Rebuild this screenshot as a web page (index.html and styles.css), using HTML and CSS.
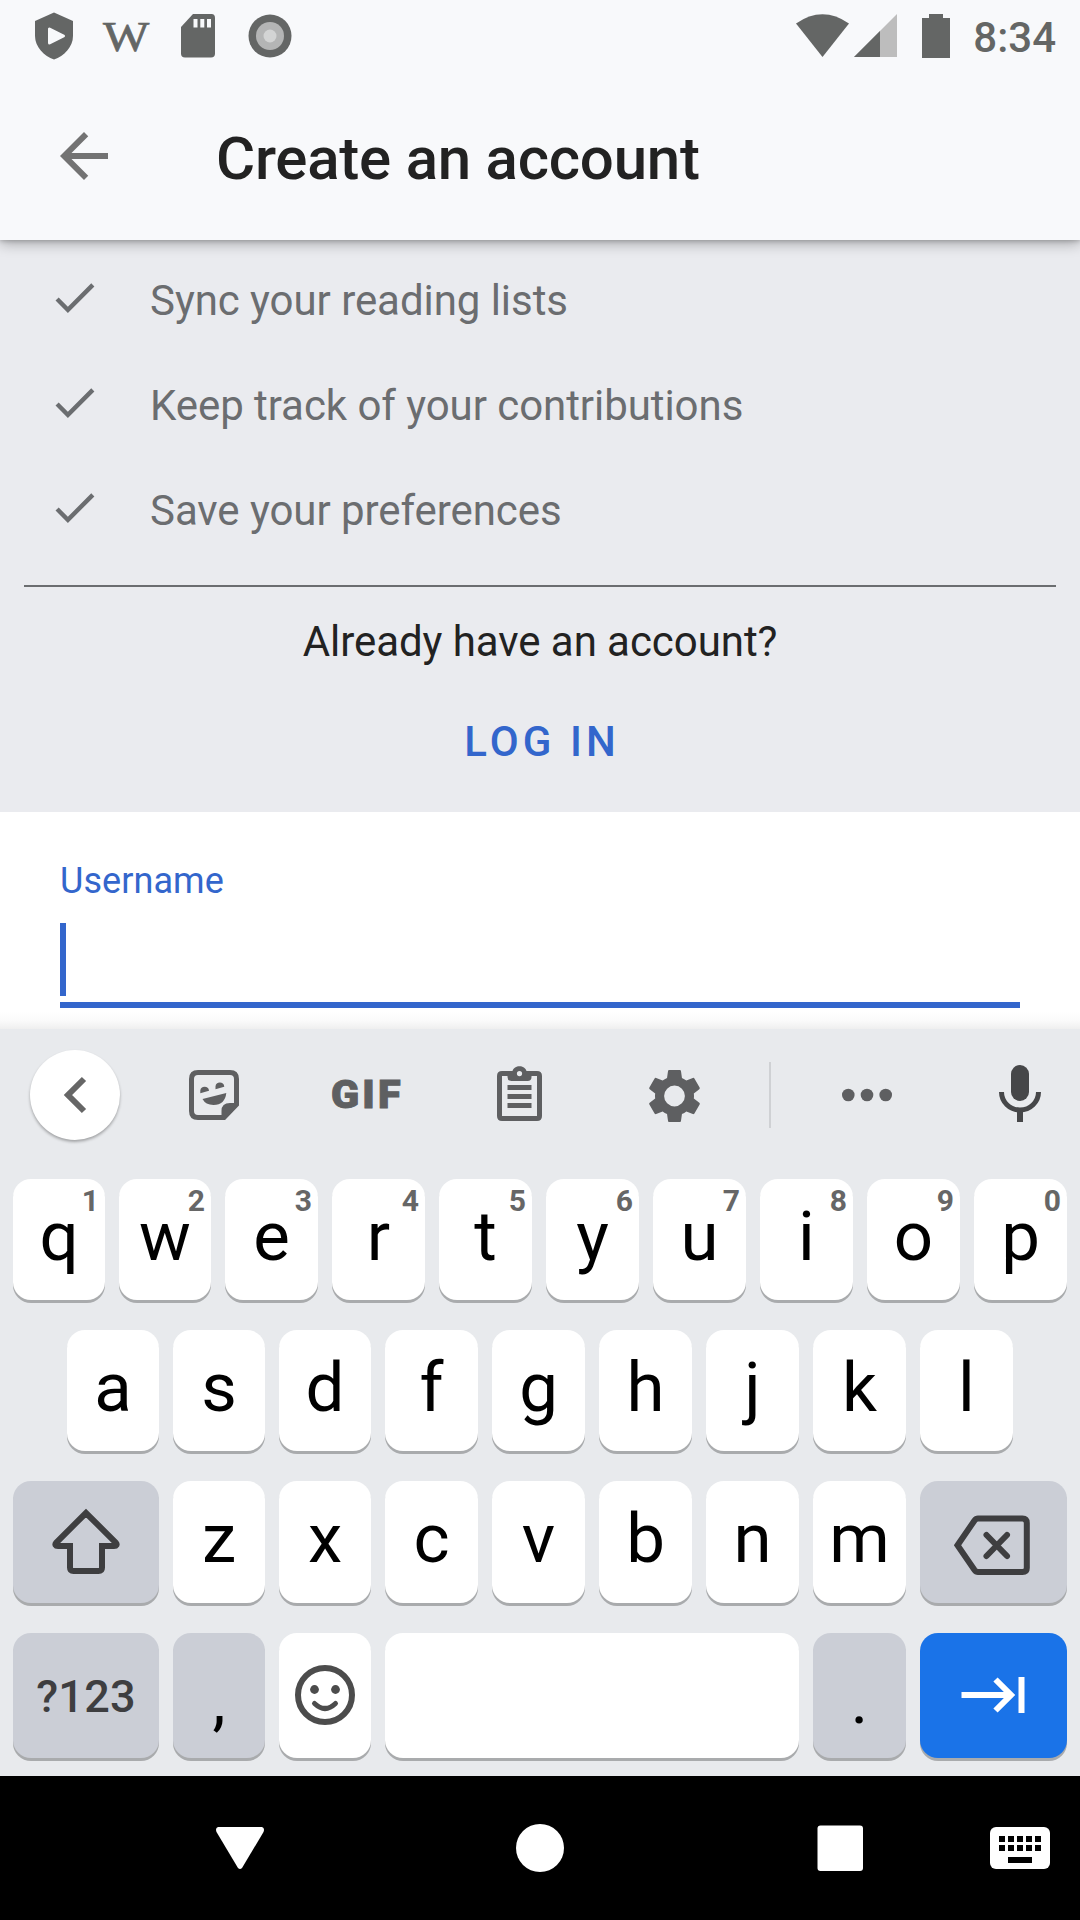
FILE: index.html
```html
<!DOCTYPE html>
<html lang="en">
<head>
<meta charset="utf-8">
<title>Create an account</title>
<link rel="stylesheet" href="styles.css">
</head>
<body>
<div class="screen">
  <header class="header">
    <div class="status-bar">
      <div class="status-left">
        <svg class="status-icon" viewBox="0 0 72 72"><path fill="#646665" d="M36 12.500L55 21V36C55 47 46 56 36 59.500C26 56 17 47 17 36V21Z"/><path fill="#f8f9fb" stroke="#f8f9fb" stroke-width="3" stroke-linejoin="round" d="M31.500 29V43L45.500 36Z"/></svg>
        <div class="status-icon wiki"><span class="wiki-letter">W</span></div>
        <svg class="status-icon" viewBox="0 0 72 72"><path fill="#646665" d="M31 14H49.500Q53 14 53 18V53.500Q53 57.500 49 57.500H23Q19 57.500 19 53.500V27Z"/><path fill="#f8f9fb" d="M31.500 19h4v8.500h-4zM38.300 19h4v8.500h-4zM45 19h4v8.500h-4z"/></svg>
        <svg class="status-icon" viewBox="0 0 72 72"><circle cx="36" cy="36" r="21.500" fill="#646665"/><circle cx="36" cy="36" r="14" fill="#b4b5b5"/><circle cx="36" cy="36" r="6.500" fill="#d3d4d4"/></svg>
      </div>
      <div class="status-right">
        <svg class="signals" viewBox="797 0 154 72"><path fill="#646665" d="M797 23.500Q823.500 5 850 23.500L823.500 57Z"/><path fill="#bdbdbd" d="M898 14V57H855Z"/><path fill="#646665" d="M881 31V57H855ZM930 14h14v4h7v40h-28V18h7z"/></svg>
        <span class="clock">8:34</span>
      </div>
    </div>
    <div class="app-bar">
      <svg class="back" viewBox="0 0 24 24"><path fill="#737373" d="M20 11H7.830l5.590-5.590L12 4l-8 8 8 8 1.410-1.410L7.830 13H20v-2z"/></svg>
      <h1 class="title">Create an account</h1>
    </div>
  </header>

  <main class="content">
    <section class="intro">
      <ul class="benefits">
        <li class="benefit"><svg class="check" viewBox="0 0 24 24"><path d="M9 16.170L4.830 12l-1.420 1.410L9 19 21 7l-1.410-1.410z"/></svg>Sync your reading lists</li>
        <li class="benefit"><svg class="check" viewBox="0 0 24 24"><path d="M9 16.170L4.830 12l-1.420 1.410L9 19 21 7l-1.410-1.410z"/></svg>Keep track of your contributions</li>
        <li class="benefit"><svg class="check" viewBox="0 0 24 24"><path d="M9 16.170L4.830 12l-1.420 1.410L9 19 21 7l-1.410-1.410z"/></svg>Save your preferences</li>
      </ul>
      <div class="rule"></div>
      <p class="question">Already have an account?</p>
      <a class="login">LOG IN</a>
    </section>
    <section class="form">
      <label class="label">Username</label>
      <div class="field"><span class="caret"></span></div>
    </section>
  </main>

  <section class="keyboard">
    <div class="toolbar">
      <div class="round"><svg viewBox="0 0 90 90"><path fill="none" stroke="#666" stroke-width="6" d="M54 29L38 45L54 61"/></svg></div>
      <svg class="sticker" viewBox="0 0 50 50"><path fill="none" stroke="#5e5f61" stroke-width="5" d="M35 47.500H9Q2.500 47.500 2.500 41V9Q2.500 2.500 9 2.500H41Q47.500 2.500 47.500 9V34.500Z"/><path fill="#5e5f61" d="M32.500 49V41Q32.500 33 41 33H49V34.500L35 50ZM13.500 29L37.300 23Q36 34.800 24.500 35Q16.500 34.800 13.500 29ZM11.300 23.200V20.500A4.400 4.400 0 0 1 20 20.500V20.800ZM26.500 19.300V16.300A4.400 4.400 0 0 1 35.200 16.300V16.800Z"/></svg>
      <div class="gif"><span class="gif-text">GIF</span></div>
      <svg class="clipboard" viewBox="0 0 45 55"><path fill="#5e5f61" fill-rule="evenodd" d="M5 5H15.500C17 -1.500 28 -1.500 29.500 5H40Q45 5 45 10V50Q45 55 40 55H5Q0 55 0 50V10Q0 5 5 5ZM5 10V50H40V10H34.500V11Q34.500 15 30.500 15H14.500Q10.500 15 10.500 11V10ZM22.500 5A2.600 2.600 0 1 0 22.500 10.200A2.600 2.600 0 1 0 22.500 5ZM10.500 19H34.500V24H10.500ZM10.500 28H34.500V33H10.500ZM10.500 37H34.500V42H10.500Z"/></svg>
      <svg class="gear" viewBox="2.200 2 19.600 20"><path fill="#5e5f61" d="M19.430 12.980c.04-.32.07-.64.07-.98s-.03-.66-.07-.98l2.110-1.650c.19-.15.24-.42.120-.64l-2-3.460c-.12-.22-.39-.3-.61-.22l-2.490 1c-.52-.4-1.080-.73-1.690-.98l-.38-2.650C14.460 2.180 14.250 2 14 2h-4c-.25 0-.46.18-.49.420l-.38 2.650c-.61.25-1.170.59-1.690.98l-2.490-1c-.23-.09-.49 0-.61.220l-2 3.460c-.13.22-.07.49.12.64l2.110 1.650c-.04.32-.07.65-.07.98s.03.66.07.98l-2.110 1.650c-.19.15-.24.42-.12.64l2 3.460c.12.22.39.3.61.22l2.490-1c.52.4 1.080.73 1.690.98l.38 2.650c.03.24.24.42.49.42h4c.25 0 .46-.18.49-.42l.38-2.650c.61-.25 1.170-.59 1.690-.98l2.490 1c.23.09.49 0 .61-.22l2-3.460c.12-.22.07-.49-.12-.64l-2.110-1.650zM12 16a4 4 0 1 1 0-8 4 4 0 0 1 0 8z"/></svg>
      <div class="separator"></div>
      <svg class="dots" viewBox="0 0 50 14"><g fill="#5e5f61"><circle cx="6.300" cy="7" r="6.300"/><circle cx="25" cy="7" r="6.300"/><circle cx="43.700" cy="7" r="6.300"/></g></svg>
      <svg class="mic" viewBox="0 0 42 57"><rect x="12" width="18" height="36" rx="9" fill="#464749"/><path fill="none" stroke="#464749" stroke-width="5" d="M2.500 27A18.500 18 0 0 0 39.500 27"/><path fill="#464749" d="M18 44h6v13h-6z"/></svg>
    </div>
    <div class="keys">
      <div class="row row-top">
        <div class="key">q<sup class="hint">1</sup></div><div class="key">w<sup class="hint">2</sup></div><div class="key">e<sup class="hint">3</sup></div><div class="key">r<sup class="hint">4</sup></div><div class="key">t<sup class="hint">5</sup></div><div class="key">y<sup class="hint">6</sup></div><div class="key">u<sup class="hint">7</sup></div><div class="key">i<sup class="hint">8</sup></div><div class="key">o<sup class="hint">9</sup></div><div class="key">p<sup class="hint">0</sup></div>
      </div>
      <div class="row row-home">
        <div class="key">a</div><div class="key">s</div><div class="key">d</div><div class="key">f</div><div class="key">g</div><div class="key">h</div><div class="key">j</div><div class="key">k</div><div class="key">l</div>
      </div>
      <div class="row row-lower">
        <div class="key mod"><svg viewBox="0 0 146 122"><path fill="none" stroke="#3e3e40" stroke-width="6" d="M73 32L43.300 61.500C41.500 63.500 42.500 65 45 65H57V86.500Q57 90 60.500 90H85.500Q89 90 89 86.500V65H101C103.500 65 104.500 63.500 102.700 61.500Z"/></svg></div>
        <div class="key">z</div><div class="key">x</div><div class="key">c</div><div class="key">v</div><div class="key">b</div><div class="key">n</div><div class="key">m</div>
        <div class="key mod"><svg viewBox="0 0 147 122"><path fill="none" stroke="#3e3e40" stroke-width="6" d="M37.500 64.300L54.500 39.500Q56 37.500 58 37.500H102.500Q106.800 37.500 106.800 42V87Q106.800 91 102.500 91H58Q56 91 54.500 89Z"/><path stroke="#3e3e40" stroke-width="6" stroke-linecap="round" d="M66.500 54L87 75M87 54L66.500 75"/></svg></div>
      </div>
      <div class="row row-bottom">
        <div class="key mod sym">?123</div>
        <div class="key mod punct">,</div>
        <div class="key"><svg viewBox="0 0 92 125"><g fill="none" stroke="#4c4c4c"><circle cx="46" cy="62" r="27" stroke-width="6"/><path stroke-width="5" stroke-linecap="round" d="M35.500 70.500Q46 80.500 56.500 70.500"/></g><g fill="#4c4c4c"><circle cx="35.500" cy="56.500" r="4.400"/><circle cx="56.500" cy="56.500" r="4.400"/></g></svg></div>
        <div class="key"></div>
        <div class="key mod punct">.</div>
        <div class="key enter"><svg viewBox="0 0 147 125"><path fill="none" stroke="#fff" stroke-width="6" d="M41.500 62H89M75.500 46.500L91 62L75.500 77.500M101.500 44V80"/></svg></div>
      </div>
    </div>
  </section>

  <nav class="nav">
    <svg class="nav-icons" viewBox="0 0 1080 144"><g fill="#fff"><path d="M218 51H262Q265 52 263.500 56L242 92Q240 94 238 92L216.500 56Q215 52 218 51Z"/><circle cx="540" cy="72" r="24"/><rect x="817.500" y="49.500" width="45.500" height="45.500" rx="3"/><rect x="990" y="51" width="60" height="42" rx="6"/></g><path fill="#000" d="M999 60h6v6h-6zM1008 60h6v6h-6zM1017 60h6v6h-6zM1026 60h6v6h-6zM1035 60h6v6h-6zM999 69h6v6h-6zM1008 69h6v6h-6zM1017 69h6v6h-6zM1026 69h6v6h-6zM1035 69h6v6h-6zM1008 81h24v6h-24z"/></svg>
  </nav>
</div>
</body>
</html>
```
FILE: styles.css
```css
* { box-sizing: border-box; }
body { margin: 0; font-family: Roboto, sans-serif; }
svg { display: block; }
.screen { width: 1080px; height: 1920px; display: flex; flex-direction: column; overflow: hidden; background: #fff; }

.header { height: 240px; flex: none; background: #f8f9fb; position: relative; z-index: 1; box-shadow: 0 3px 13px rgba(0, 0, 0, .32), 0 1px 4px rgba(0, 0, 0, .18); }
.status-bar { height: 72px; display: flex; justify-content: space-between; padding: 0 24px 0 18px; }
.status-left { display: flex; }
.status-icon { width: 72px; height: 72px; }
.wiki { display: flex; justify-content: center; align-items: center; }
.wiki-letter { font: 49px/56px "Liberation Serif", serif; color: #646665; -webkit-text-stroke: .8px #646665; transform: translateY(1px) scaleY(.88); }
.status-right { display: flex; }
.signals { width: 154px; height: 72px; }
.clock { margin-left: 23px; font-size: 42px; line-height: 75px; font-weight: 500; color: #646665; }
.app-bar { height: 168px; display: flex; align-items: center; padding-left: 48px; }
.back { width: 72px; height: 72px; }
.title { margin: 5px 0 0 96px; font-size: 60px; line-height: 72px; font-weight: 500; letter-spacing: -.24px; color: #222; }

.content { height: 789px; flex: none; }
.intro { height: 572px; background: #eaebef; padding: 8px 24px 0; text-align: center; }
.benefits { list-style: none; margin: 0; padding: 0; text-align: left; }
.benefit { height: 105px; display: flex; align-items: center; padding-left: 24px; font-size: 42px; letter-spacing: -.06px; color: #6b6d70; }
.check { width: 53px; height: 53px; margin: -7px 49px 0 0; fill: #6b6d70; }
.rule { height: 2px; margin-top: 22px; background: #6b6d70; }
.question { margin: 30px 0 0; font-size: 42px; line-height: 50px; letter-spacing: -.06px; color: #222; }
.login { display: block; margin-top: 50px; padding-left: 4px; font-size: 42px; line-height: 50px; font-weight: 500; letter-spacing: 4.1px; color: #36c; }
.form { height: 217px; padding: 48px 60px 0; background: linear-gradient(#fff 200px, #fafafa 209px, #efefef 217px); }
.label { display: block; font-size: 36px; line-height: 42px; letter-spacing: .06px; color: #36c; }
.field { margin-top: 21px; height: 85px; border-bottom: 6px solid #36c; }
.caret { display: block; width: 6px; height: 73px; background: #36c; }

.keyboard { height: 747px; flex: none; background: #e8eaed; }
.toolbar { height: 150px; display: flex; align-items: center; padding: 0 39px 18px 30px; }
.round { width: 90px; height: 90px; border-radius: 50%; background: #fff; box-shadow: 0 2px 3px rgba(0, 0, 0, .3); }
.sticker { width: 50px; height: 50px; margin-left: 69px; }
.gif { width: 72px; margin-left: 91px; display: flex; justify-content: center; }
.gif-text { font-size: 39px; line-height: 40px; font-weight: 900; letter-spacing: 3px; color: #5e5f61; -webkit-text-stroke: 1px #5e5f61; margin-right: -3px; transform: scaleX(1.06); }
.clipboard { width: 45px; height: 55px; margin: -4px 0 0 95px; }
.gear { width: 51px; height: 52px; margin: 2px 0 0 107px; }
.separator { width: 2px; height: 66px; margin-left: 69px; background: #cfd1d4; }
.dots { width: 50px; height: 14px; margin-left: 71px; }
.mic { width: 42px; height: 57px; margin-left: auto; margin-top: -3px; }

.keys { display: flex; flex-direction: column; padding: 0 13px; }
.row { display: grid; column-gap: 14px; height: 121px; margin-bottom: 30px; grid-template-rows: 100%; }
.row-top { grid-template-columns: repeat(2, 92px) repeat(8, 93px); }
.row-home { grid-template-columns: repeat(3, 92px) repeat(6, 93px); padding-left: 54px; }
.row-lower { height: 122px; grid-template-columns: 146px repeat(2, 92px) repeat(5, 93px) 147px; }
.row-bottom { height: 125px; margin: 0; grid-template-columns: 146px 92px 92px 414px 93px 147px; }
.key { position: relative; border-radius: 18px; background: #fff; box-shadow: 0 3px 0 #a9abad; font-size: 69px; line-height: 116px; text-align: center; color: #000; }
.hint { position: absolute; top: 4px; right: 6px; font-size: 30px; line-height: 35px; font-weight: 700; color: #666; }
.mod { background: #cbced6; }
.sym { font-size: 45px; line-height: 127px; letter-spacing: .2px; font-weight: 500; color: #3e3e40; }
.punct { font-size: 66px; line-height: 136px; }
.enter { background: #1a73e8; }

.nav { height: 144px; flex: none; background: #000; }
.nav-icons { width: 1080px; height: 144px; }
```
